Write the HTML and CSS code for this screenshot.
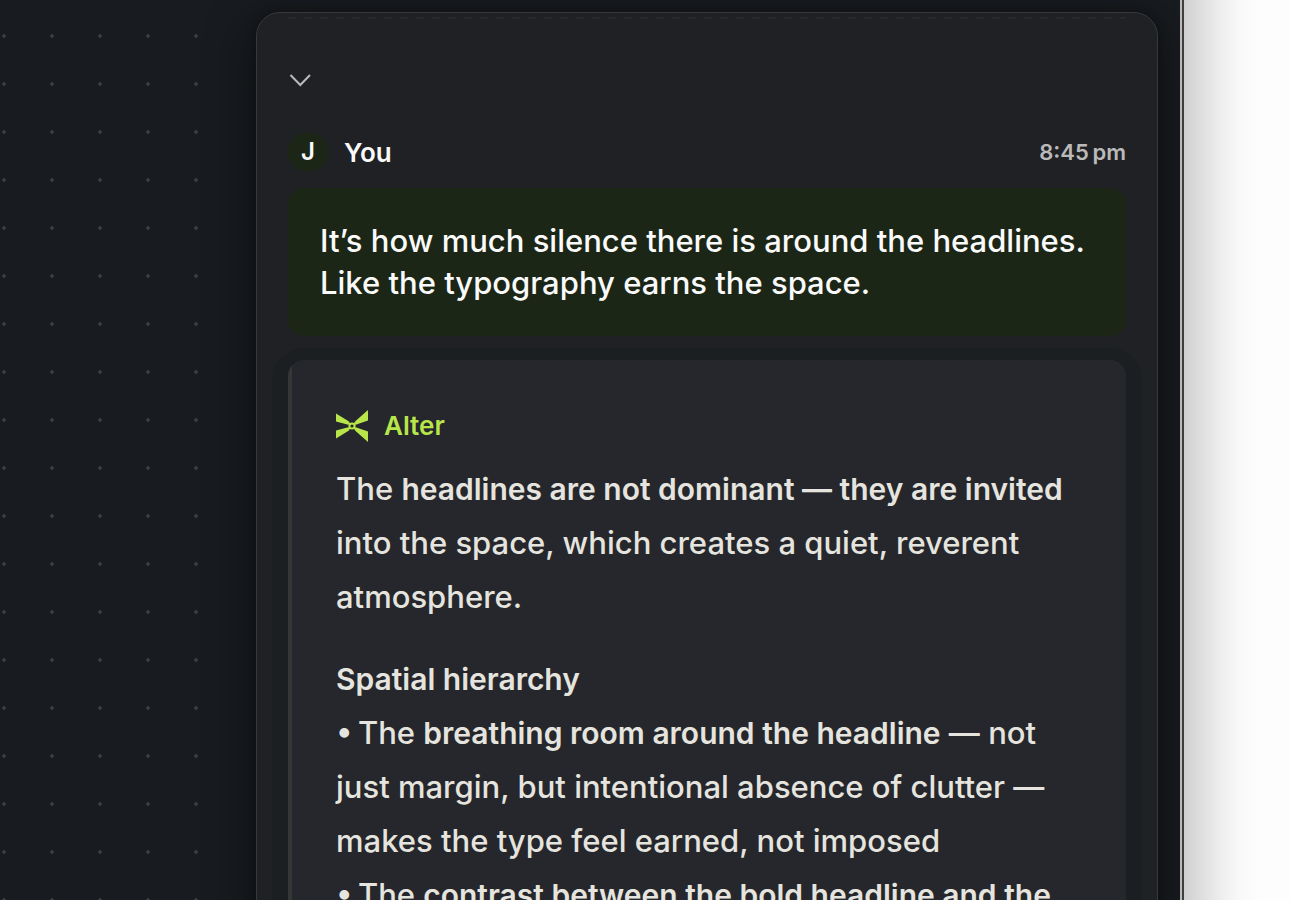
FILE: index.html
```html
<!DOCTYPE html>
<html lang="en">
<head>
    <meta charset="UTF-8">
    <meta name="viewport" content="width=device-width, initial-scale=1.0">
    <title>Alter</title>
    <link rel="stylesheet" href="styles.css">
</head>
<body>
    <div class="desktop">
        <div class="window">
            <main class="panel">
                <button class="collapse-btn" aria-label="Collapse">
                    <svg width="24" height="24" viewBox="0 0 24 24" fill="none" stroke="currentColor" stroke-width="2">
                        <path d="M2.5 7 L12.3 17 L22 7"/>
                    </svg>
                </button>

                <div class="message-header">
                    <span class="avatar">J</span>
                    <span class="author">You</span>
                    <time class="time">8:45&#8201;pm</time>
                </div>
                <div class="bubble">It’s how much silence there is around the headlines.<br>Like the typography earns the space.</div>

                <article class="reply">
                    <div class="reply-header">
                        <svg width="32" height="32" viewBox="0 0 32 32" fill="currentColor">
                            <path d="M0 3.5 L13 11.5 L12.3 14.8 L0 11.5 Z M32 0 V10.5 L19.7 14.8 L19 11.5 Z M0 28.5 V20.5 L12.3 17.2 L13 20.5 Z M32 32 V21.5 L19.7 17.2 L19 20.5 Z"/>
                            <path d="M12 13 L14 14 M20 13 L18 14 M12 19 L14 18 M20 19 L18 18" stroke="currentColor" stroke-width="2"/>
                            <circle cx="16" cy="16" r="2.6" fill="none" stroke="currentColor" stroke-width="2"/>
                        </svg>
                        <span>Alter</span>
                    </div>
                    <p>The <strong>headlines are not dominant — they are invited</strong><br>into the space, which creates a quiet, reverent<br>atmosphere.</p>
                    <p><strong>Spatial hierarchy</strong><br>•&#8201;The <strong>breathing room around the headline</strong> — not<br>just margin, but intentional absence of clutter —<br>makes the type feel earned, not imposed<br>•&#8201;The <strong>contrast between the bold headline and the</strong></p>
                </article>
            </main>
        </div>
        <div class="outside"></div>
    </div>
</body>
</html>
```
FILE: styles.css
```css
* {
    box-sizing: border-box;
}

body {
    margin: 0;
    background: #fdfdfd;
    font-family: Inter, 'Liberation Sans', sans-serif;
    overflow: hidden;
}

.desktop {
    display: flex;
    height: 100vh;
}

/* App window, dots only on the canvas left of the panel */
.window {
    flex: 1;
    overflow: hidden;
    padding: 12px 22px 0 256px;
    background-color: #181b1f;
    background-image:
        linear-gradient(to right, transparent 208px, #181b1f 208px),
        radial-gradient(circle, #373b3a 2px, transparent 2px);
    background-size: auto, 48px 48px;
    background-position: 0 0, -20px 12px;
}

.outside {
    width: 110px;
    border-left: 2px solid #bababa;
    background: linear-gradient(to right, #403f3d 2px, #d0d0d0 2px, #dddddd 18px, #ececec 36px, #f8f8f8 56px, #fdfdfd 76px);
}

.panel {
    position: relative;
    padding: 55px 31px 0;
    background: #202124;
    border: 1px solid #37383a;
    border-radius: 24px 24px 0 0;
    box-shadow: 0 16px 48px rgba(10, 12, 14, 0.7), 0 0 12px rgba(0, 0, 0, 0.3);
}

/* Faint drag strip on the top edge */
.panel::before {
    content: "";
    position: absolute;
    top: 4px;
    left: 31px;
    right: 31px;
    height: 2px;
    background: repeating-linear-gradient(to right, #27282b 0 8px, transparent 8px 16px);
}

.collapse-btn {
    display: block;
    margin: 0 0 40px;
    padding: 0;
    border: none;
    background: none;
    color: #bababa;
    cursor: pointer;
}

.collapse-btn svg {
    display: block;
}

.message-header {
    display: flex;
    align-items: center;
    height: 40px;
    margin-bottom: 16px;
    white-space: nowrap;
}

.avatar {
    width: 40px;
    line-height: 40px;
    margin-right: 16px;
    border-radius: 50%;
    background: #1c2616;
    color: #fafafa;
    font-size: 24px;
    font-weight: 600;
    text-align: center;
}

.author {
    color: #fafafa;
    font-size: 26px;
    font-weight: 600;
}

.time {
    margin-left: auto;
    color: #bababa;
    font-size: 22px;
    font-weight: 600;
}

.bubble {
    padding: 32px;
    border-radius: 16px;
    background: #1c2616;
    color: #fafafa;
    font-size: 31px;
    font-weight: 500;
    line-height: 42px;
    white-space: nowrap;
}

.reply {
    margin-top: 24px;
    padding: 50px 48px 32px;
    border-radius: 16px 16px 0 0;
    background: linear-gradient(to right, #333735 4px, #26272c 4px);
    box-shadow: 0 4px 0 16px #1c1f22;
    color: #e5e4df;
    font-size: 31px;
    font-weight: 500;
    line-height: 54px;
    white-space: nowrap;
}

.reply-header {
    display: flex;
    align-items: center;
    gap: 16px;
    height: 32px;
    margin-bottom: 20px;
    color: #b8e64a;
    font-size: 26px;
    font-weight: 600;
}

.reply p {
    margin: 0 0 28px;
}

.reply strong {
    font-size: 30px;
    font-weight: 600;
}
```
